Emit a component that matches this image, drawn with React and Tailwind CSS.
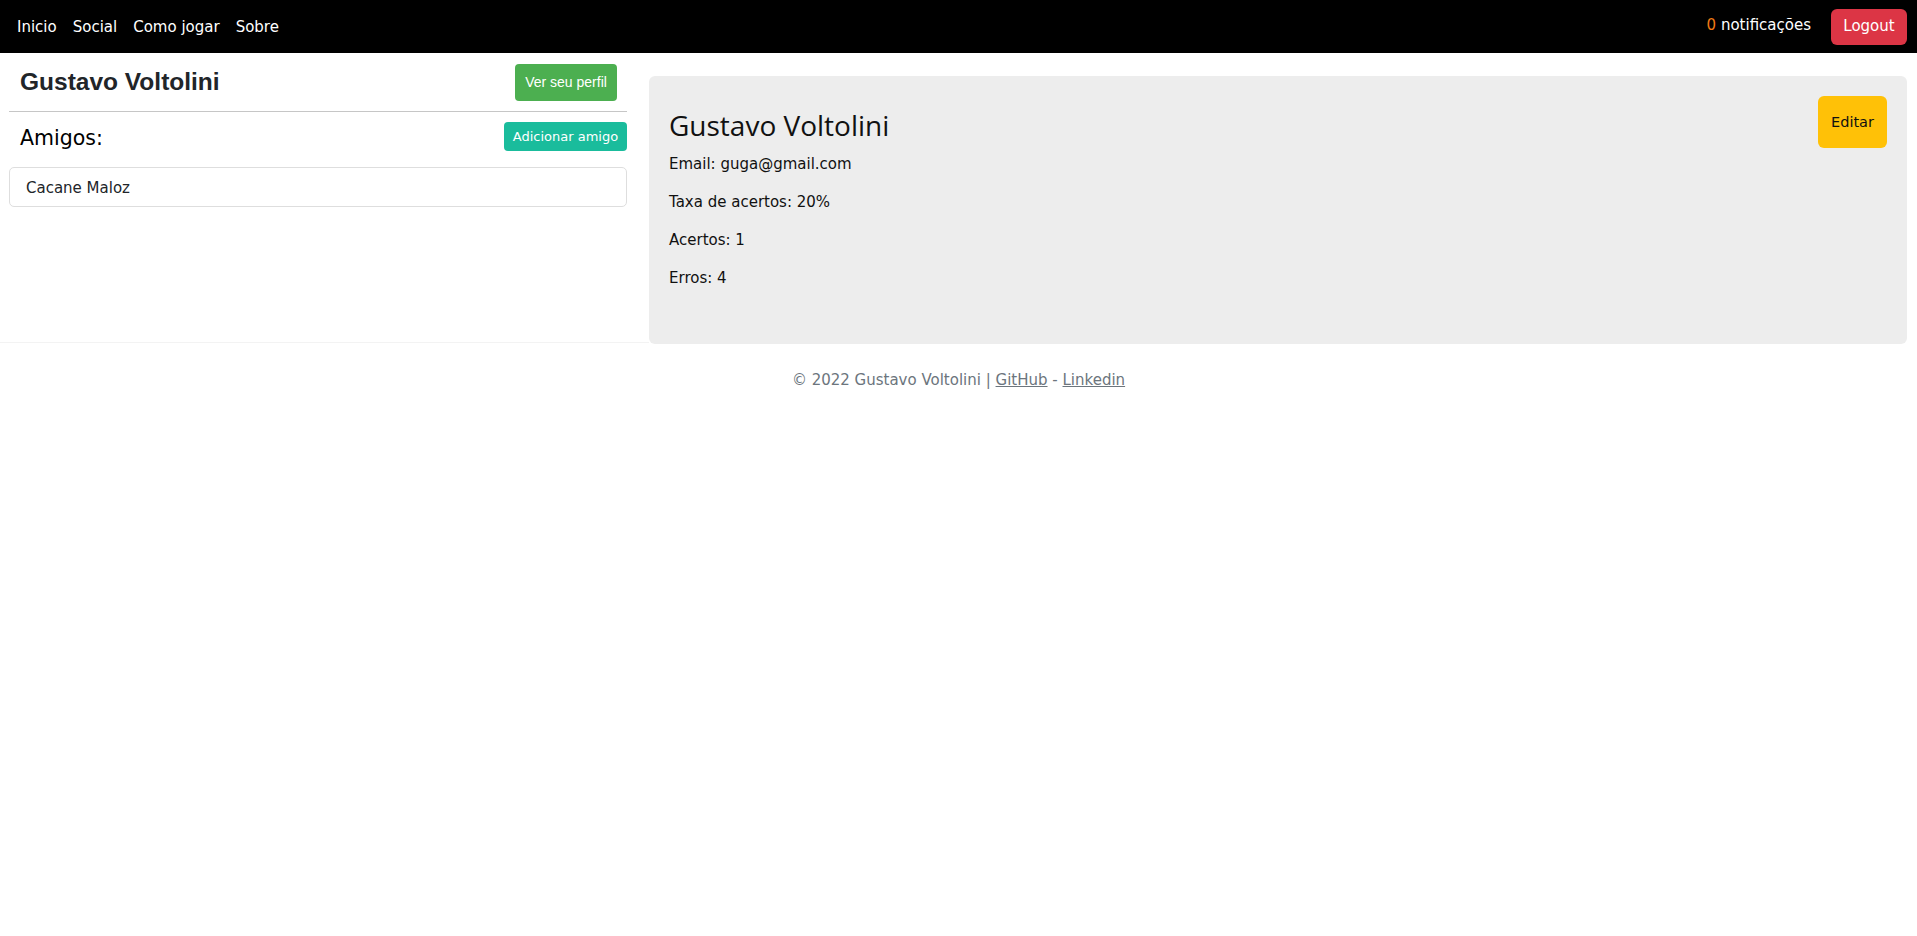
import React from 'react';

const navLinks = ['Inicio', 'Social', 'Como jogar', 'Sobre'];

const stats = [
  'Email: guga@gmail.com',
  'Taxa de acertos: 20%',
  'Acertos: 1',
  'Erros: 4',
];

const Navbar = () => (
  <nav className="h-[53px] bg-black flex items-center justify-between pl-[17px] pr-[10px] text-white text-[15px]">
    <div className="flex items-center gap-[16px] mt-[2px]">
      {navLinks.map((link) => (
        <a key={link} href="#" className="text-white">
          {link}
        </a>
      ))}
    </div>
    <div className="flex items-center">
      <span className="mb-[3px]">
        <span className="text-[#f07a14]">0</span> notificações
      </span>
      <button className="ml-[20px] h-[36px] w-[76px] rounded-[6px] bg-[#dc3545] text-white text-[15px]">
        Logout
      </button>
    </div>
  </nav>
);

const FriendsPanel = () => (
  <div className="w-[649px] h-[290px] pl-[9px] pr-[22px] bg-white border-b border-[#f3f3f3]">
    <div className="h-[58px] flex items-center justify-between pl-[11px] pr-[10px]">
      <h1 className="font-['Liberation_Sans',Arial,sans-serif] font-bold text-[24.5px] text-[#212529]">
        Gustavo Voltolini
      </h1>
      <button className="h-[37px] w-[102px] rounded-[4px] bg-[#4caf50] text-white text-[14px] font-['Liberation_Sans',Arial,sans-serif]">
        Ver seu perfil
      </button>
    </div>
    <div className="h-px bg-[#c6c6c6]" />
    <div className="pt-[10px] flex items-center justify-between pl-[11px]">
      <h2 className="text-[20.5px] leading-[29px] translate-y-[2px] text-black">Amigos:</h2>
      <button className="h-[29px] w-[123px] rounded-[4px] bg-[#1abc9c] text-white text-[13px]">
        Adicionar amigo
      </button>
    </div>
    <ul className="mt-[16px]">
      <li className="h-[40px] flex items-center pl-[16px] pt-[2px] border border-[#dedede] rounded-[5px] bg-white text-[15px] text-[#212529]">
        Cacane Maloz
      </li>
    </ul>
  </div>
);

const ProfileCard = () => (
  <div className="flex-1 pt-[23px] pr-[10px]">
    <div className="h-[268px] bg-[#ededed] rounded-[6px] p-[20px] flex justify-between items-start">
      <div>
        <h2 className="mt-[13px] mb-[10px] font-['Open_Sans',sans-serif] text-[28px] leading-[1.2] text-[#111]">
          Gustavo Voltolini
        </h2>
        {stats.map((line) => (
          <p key={line} className="text-[15px] leading-[22.5px] mb-[15.5px] text-[#111]">
            {line}
          </p>
        ))}
      </div>
      <button className="h-[52px] w-[69px] pt-[2px] rounded-[6px] bg-[#ffc107] text-[#111] text-[14.5px]">
        Editar
      </button>
    </div>
  </div>
);

export default function App() {
  return (
    <div className="min-h-screen bg-white font-['DejaVu_Sans',Verdana,sans-serif]">
      <Navbar />
      <main className="flex items-start">
        <FriendsPanel />
        <ProfileCard />
      </main>
      <footer className="pt-[25px] text-center text-[15px] leading-[1.5] text-[#6c757d]">
        © 2022 Gustavo Voltolini |{' '}
        <a href="#" className="underline">GitHub</a> -{' '}
        <a href="#" className="underline">Linkedin</a>
      </footer>
    </div>
  );
}
